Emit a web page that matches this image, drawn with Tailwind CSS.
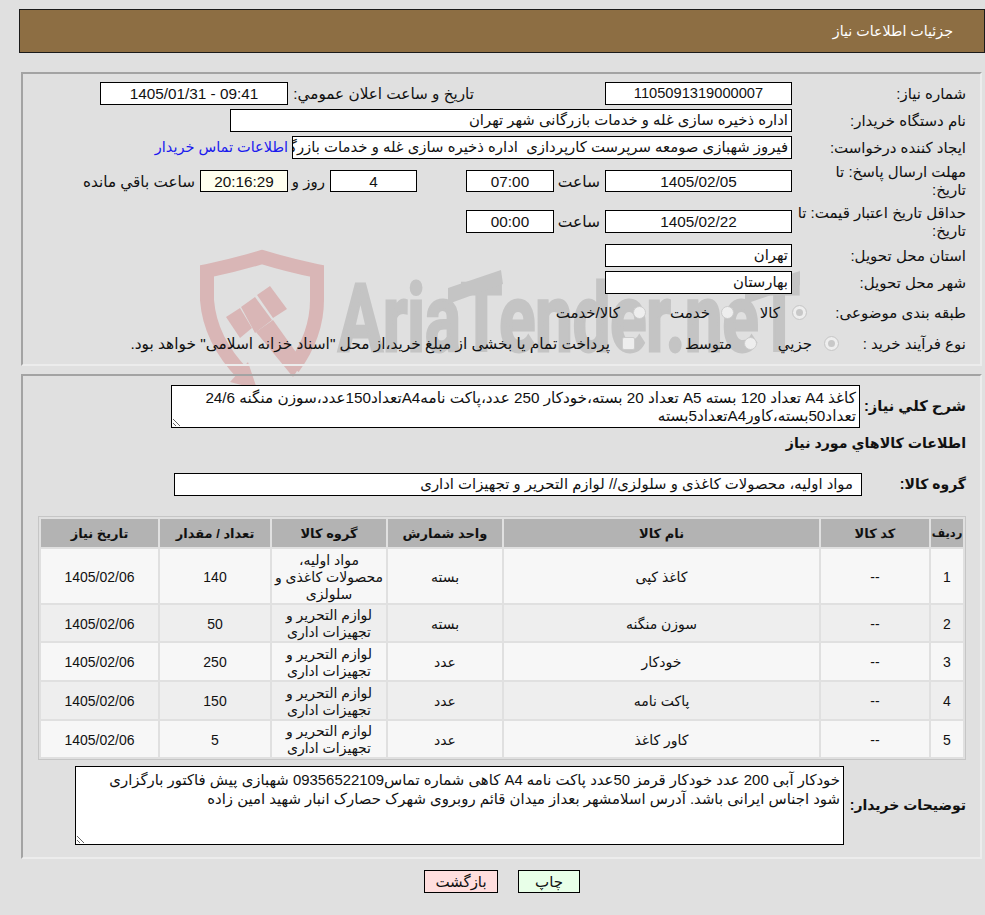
<!DOCTYPE html>
<html lang="fa" dir="rtl">
<head>
<meta charset="utf-8">
<script src="https://cdn.jsdelivr.net/npm/@tailwindcss/browser@4"></script>
</head>
<body class="bg-[#e0e0e0] text-[#111] [font-family:'Liberation_Sans','DejaVu_Sans',sans-serif] text-[14px] leading-[17px] relative w-[985px] h-[915px] overflow-hidden">

<!-- watermark -->
<svg class="absolute left-0 top-0 w-[985px] h-[915px]" viewBox="0 0 985 915" aria-hidden="true">
  <path d="M293 368 Q317 335 317 300 L317 271 Q288 265 262 257 Q236 265 207 271 L207 300 Q210 340 243 374" fill="none" stroke="#d9b6b6" stroke-width="14"/>
  <polygon points="248,362 257,389 230,382" fill="#d9b6b6"/>
  <polygon points="270,286 287,309 273,318 257,295" fill="#d9b6b6"/>
  <polygon points="255,297 272,320 255,333 241,307" fill="#d9b6b6"/>
  <polygon points="240,308 252,328 240,338 226,317" fill="#d9b6b6"/>
  <polygon points="256,332 273,320 303,362 293,377" fill="#d9b6b6"/>
  <text x="338" y="351" dir="ltr" textLength="462" lengthAdjust="spacingAndGlyphs" font-family="Roboto" font-weight="700" font-size="94" fill="#c4c4c4" stroke="#c4c4c4" stroke-width="3" style="direction:ltr">AriaTender.neT</text>
  <polygon points="448,288 501,270 503,284 448,304" fill="#c4c4c4"/>
  <polygon points="745,288 800,271 800,285 745,304" fill="#c4c4c4"/>
</svg>

<div class="relative pt-[9px]">
  <!-- header -->
  <div class="ml-[19px] h-[44px] bg-[#8d6e43] border border-[#1a1a1a] flex items-center pr-[31px] text-white text-[14.25px]">جزئیات اطلاعات نیاز</div>

  <!-- panel 1 -->
  <div class="mt-[19px] mr-[3px] w-[961px] h-[294px] border-2 border-[#a3a3a3] border-r-[#ececec] border-b-[#ececec] pt-[8px] pr-[14px] flex flex-col gap-[4px]">
    <div class="flex items-center h-[23px]">
      <div class="w-[174px] shrink-0 text-[15px]">شماره نیاز:</div>
      <div class="w-[187px] h-[23px] shrink-0 bg-white border border-black flex items-center justify-center text-[14.67px]">1105091319000007</div>
      <div class="mr-[131px] w-[181px] shrink-0 text-[15.25px] whitespace-nowrap">تاریخ و ساعت اعلان عمومي:</div>
      <div class="mr-[5px] w-[188px] h-[23px] shrink-0 bg-white border border-black flex items-center justify-center text-[15.3px]" dir="ltr">1405/01/31 - 09:41</div>
    </div>
    <div class="flex items-center h-[23px]">
      <div class="w-[174px] shrink-0 text-[15px]">نام دستگاه خریدار:</div>
      <div class="w-[562px] h-[23px] shrink-0 bg-white border border-black flex items-center px-[3px] whitespace-pre overflow-hidden text-[14.87px]">اداره ذخیره سازی غله و خدمات بازرگانی شهر تهران</div>
    </div>
    <div class="flex items-center h-[23px]">
      <div class="w-[174px] shrink-0 text-[15px]">ایجاد کننده درخواست:</div>
      <div class="w-[500px] h-[23px] shrink-0 bg-white border border-black flex items-center px-[3px] whitespace-pre overflow-hidden text-[14.87px]">فیروز شهبازی صومعه سرپرست کارپردازی  اداره ذخیره سازی غله و خدمات بازرگانی شهر تهران</div>
      <a class="mr-[4px] text-[#1a1aee] text-[14.5px] whitespace-nowrap">اطلاعات تماس خریدار</a>
    </div>
    <div class="flex items-center h-[36px]">
      <div class="w-[174px] shrink-0 text-[15px] leading-[18px]">مهلت ارسال پاسخ: تا<br>تاریخ:</div>
      <div class="w-[187px] h-[22px] shrink-0 bg-white border border-black flex items-center justify-center text-[15.3px]">1405/02/05</div>
      <div class="w-[51px] shrink-0 pr-[5px] text-[15.5px]">ساعت</div>
      <div class="w-[88px] h-[22px] shrink-0 bg-white border border-black flex items-center justify-center text-[15.3px]">07:00</div>
      <div class="w-[49px] shrink-0"></div>
      <div class="w-[87px] h-[22px] shrink-0 bg-white border border-black flex items-center justify-center text-[15.3px]">4</div>
      <div class="w-[42px] shrink-0 pr-[5px] text-[15px]">روز و</div>
      <div class="w-[88px] h-[22px] shrink-0 bg-[#ffffef] border border-black flex items-center justify-center text-[15.3px]">20:16:29</div>
      <div class="pr-[5px] text-[15.25px] whitespace-nowrap">ساعت باقي مانده</div>
    </div>
    <div class="flex items-center h-[37px]">
      <div class="w-[174px] shrink-0 text-[15px] leading-[18px]">حداقل تاریخ اعتبار قیمت: تا<br>تاریخ:</div>
      <div class="w-[187px] h-[23px] shrink-0 bg-white border border-black flex items-center justify-center text-[15.3px]">1405/02/22</div>
      <div class="w-[51px] shrink-0 pr-[5px] text-[15.5px]">ساعت</div>
      <div class="w-[88px] h-[23px] shrink-0 bg-white border border-black flex items-center justify-center text-[15.3px]">00:00</div>
    </div>
    <div class="flex items-center h-[23px]">
      <div class="w-[174px] shrink-0 text-[15px]">استان محل تحویل:</div>
      <div class="w-[187px] h-[23px] shrink-0 bg-white border border-black flex items-center px-[3px] text-[14.87px]">تهران</div>
    </div>
    <div class="flex items-center h-[23px]">
      <div class="w-[174px] shrink-0 text-[15px]">شهر محل تحویل:</div>
      <div class="w-[187px] h-[23px] shrink-0 bg-white border border-black flex items-center px-[3px] text-[14.87px]">بهارستان</div>
    </div>
    <div class="flex items-center h-[28px]">
      <div class="w-[160px] shrink-0 text-[15px] whitespace-nowrap">طبقه بندی موضوعی:</div>
      <span class="w-[13px] h-[13px] shrink-0 rounded-full bg-[#c8c8c8] border-[3px] border-[#eeeeee] outline outline-[#c8c8c8]"></span>
      <span class="mr-[13px] w-[46px] shrink-0 text-[15px]">کالا</span>
      <span class="w-[13px] h-[13px] shrink-0 rounded-full bg-[#eeeeee] border border-[#cccccc]"></span>
      <span class="mr-[11px] w-[64px] shrink-0 text-[15px]">خدمت</span>
      <span class="w-[13px] h-[13px] shrink-0 rounded-full bg-[#eeeeee] border border-[#cccccc]"></span>
      <span class="mr-[13px] text-[15px] whitespace-nowrap">کالا/خدمت</span>
    </div>
    <div class="flex items-center h-[28px] -mt-[1px]">
      <div class="w-[128px] shrink-0 text-[15px] whitespace-nowrap">نوع فرآیند خرید :</div>
      <span class="w-[13px] h-[13px] shrink-0 rounded-full bg-[#c8c8c8] border-[3px] border-[#eeeeee] outline outline-[#c8c8c8]"></span>
      <span class="mr-[13px] w-[55px] shrink-0 text-[15px]">جزيي</span>
      <span class="w-[13px] h-[13px] shrink-0 rounded-full bg-[#eeeeee] border border-[#cccccc]"></span>
      <span class="mr-[12px] w-[97px] shrink-0 text-[15px]">متوسط</span>
      <span class="w-[13px] h-[13px] shrink-0 rounded-[2px] bg-[#eeeeee] border border-[#cccccc]"></span>
      <span class="mr-[12px] text-[15.4px] whitespace-nowrap">پرداخت تمام یا بخشی از مبلغ خرید،از محل "اسناد خزانه اسلامی" خواهد بود.</span>
    </div>
  </div>

  <!-- panel 2 -->
  <div class="mt-[8px] mr-[3px] w-[961px] h-[485px] border-2 border-[#a3a3a3] border-r-[#ececec] border-b-[#ececec] pt-[9px] pr-[14px]">
    <div class="flex items-center">
      <div class="w-[106px] shrink-0 font-bold text-[14.7px] whitespace-nowrap">شرح کلي نیاز:</div>
      <textarea readonly class="w-[689px] h-[43px] shrink-0 bg-white border border-black px-[3px] pt-[3px] pb-0 text-[15.25px] leading-[18px] overflow-hidden whitespace-pre">کاغذ A4 تعداد 120 بسته A5 تعداد 20 بسته،خودکار 250 عدد،پاکت نامهA4تعداد150عدد،سوزن منگنه 24/6
تعداد50بسته،کاورA4تعداد5بسته</textarea>
    </div>
    <div class="mt-[7px] font-bold text-[14.2px]">اطلاعات کالاهاي مورد نیاز</div>
    <div class="mt-[21px] flex items-center">
      <div class="w-[104px] shrink-0 font-bold text-[14px]">گروه کالا:</div>
      <div class="w-[688px] h-[23px] shrink-0 bg-white border border-black flex items-center pr-[8px] text-[14.85px]">مواد اولیه، محصولات کاغذی و سلولزی// لوازم التحریر و تجهیزات اداری</div>
    </div>
    <table class="mt-[20px] w-[928px] table-fixed border-separate border-spacing-[2px] border border-[#c6c6c6] text-center text-[14px] leading-[17px]">
      <colgroup>
        <col class="w-[32px]"><col class="w-[108px]"><col class="w-[315px]"><col class="w-[114px]"><col class="w-[114px]"><col class="w-[110px]"><col class="w-[117px]">
      </colgroup>
      <thead>
        <tr class="h-[28px] bg-[#b3b3b3] text-[13px]">
          <th class="p-0 font-bold text-[11.5px] whitespace-nowrap">ردیف</th><th class="p-0 font-bold">کد کالا</th><th class="p-0 font-bold">نام کالا</th><th class="p-0 font-bold">واحد شمارش</th><th class="p-0 font-bold">گروه کالا</th><th class="p-0 font-bold">تعداد / مقدار</th><th class="p-0 font-bold">تاریخ نیاز</th>
        </tr>
      </thead>
      <tbody class="[&_td]:pt-[2px]">
        <tr class="h-[54px] bg-[#f7f7f7]">
          <td class="p-0">1</td><td class="p-0">--</td><td class="p-0">کاغذ کپی</td><td class="p-0">بسته</td><td class="p-0">مواد اولیه، محصولات کاغذی و سلولزی</td><td class="p-0">140</td><td class="p-0">1405/02/06</td>
        </tr>
        <tr class="h-[36px] bg-[#eeeeee]">
          <td class="p-0">2</td><td class="p-0">--</td><td class="p-0">سوزن منگنه</td><td class="p-0">بسته</td><td class="p-0">لوازم التحریر و<br>تجهیزات اداری</td><td class="p-0">50</td><td class="p-0">1405/02/06</td>
        </tr>
        <tr class="h-[37px] bg-[#f7f7f7]">
          <td class="p-0">3</td><td class="p-0">--</td><td class="p-0">خودکار</td><td class="p-0">عدد</td><td class="p-0">لوازم التحریر و<br>تجهیزات اداری</td><td class="p-0">250</td><td class="p-0">1405/02/06</td>
        </tr>
        <tr class="h-[37px] bg-[#eeeeee]">
          <td class="p-0">4</td><td class="p-0">--</td><td class="p-0">پاکت نامه</td><td class="p-0">عدد</td><td class="p-0">لوازم التحریر و<br>تجهیزات اداری</td><td class="p-0">150</td><td class="p-0">1405/02/06</td>
        </tr>
        <tr class="h-[36px] bg-[#f7f7f7]">
          <td class="p-0">5</td><td class="p-0">--</td><td class="p-0">کاور کاغذ</td><td class="p-0">عدد</td><td class="p-0">لوازم التحریر و<br>تجهیزات اداری</td><td class="p-0">5</td><td class="p-0">1405/02/06</td>
        </tr>
      </tbody>
    </table>
    <div class="mt-[6px] flex items-center">
      <div class="w-[122px] shrink-0 font-bold text-[14px] whitespace-nowrap">توضیحات خریدار:</div>
      <textarea readonly class="w-[769px] h-[79px] shrink-0 bg-white border border-black px-[3px] pt-[4px] pb-0 text-[14.9px] leading-[18.5px] overflow-hidden whitespace-pre">خودکار آبی 200 عدد خودکار قرمز 50عدد پاکت نامه A4 کاهی شماره تماس09356522109 شهبازی پیش فاکتور بارگزاری
شود اجناس ایرانی باشد. آدرس اسلامشهر بعداز میدان قائم روبروی شهرک حصارک انبار شهید امین زاده</textarea>
    </div>
  </div>

  <!-- buttons -->
  <div class="mt-[11px] flex justify-center gap-[20px] pl-[19px]">
    <button class="w-[62px] h-[23px] bg-[#e8ffe8] border border-black text-[15px]">چاپ</button>
    <button class="w-[74px] h-[23px] bg-[#ffdede] border border-black text-[15px]">بازگشت</button>
  </div>
</div>
</body>
</html>
